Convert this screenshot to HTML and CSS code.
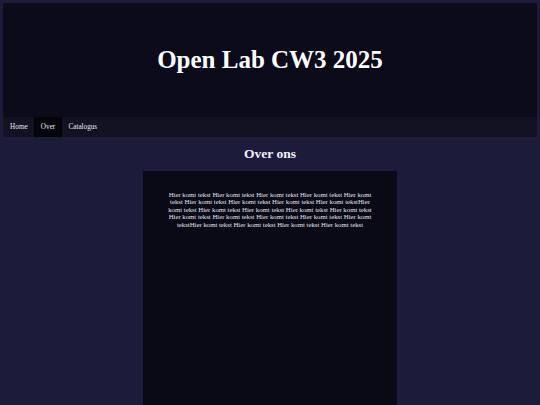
FILE: index.html
```html
<!DOCTYPE html>
<html lang="nl">
<head>
<meta charset="utf-8">
<title>Over - Open Lab CW3 2025</title>
<link rel="stylesheet" href="styles.css">
</head>
<body>
<header class="site-header">
  <h1 class="site-title">Open Lab CW3 2025</h1>
</header>
<nav class="main-nav">
  <a class="nav-link" href="#">Home</a>
  <a class="nav-link active" href="#">Over</a>
  <a class="nav-link" href="#">Catalogus</a>
</nav>
<main class="content">
  <h2 class="page-title">Over ons</h2>
  <section class="text-box">
    <p class="body-text">Hier komt tekst Hier komt tekst Hier komt tekst Hier komt tekst Hier komt tekst Hier komt tekst Hier komt tekst Hier komt tekst Hier komt tekstHier komt tekst Hier komt tekst Hier komt tekst Hier komt tekst Hier komt tekst Hier komt tekst Hier komt tekst Hier komt tekst Hier komt tekst Hier komt tekstHier komt tekst Hier komt tekst Hier komt tekst Hier komt tekst</p>
  </section>
</main>
</body>
</html>
```
FILE: styles.css
```css
html, body {
  margin: 0;
  padding: 0;
}
html {
  background: #1c1c3a;
}
body {
  background: #1c1c3a;
  font-family: "Liberation Serif", "Times New Roman", serif;
  color: #ececf2;
  padding: 3px 3px 0 3px;
  height: 100vh;
  box-sizing: border-box;
  display: flex;
  flex-direction: column;
  overflow: hidden;
}
.site-header {
  background: #0b0b1a;
  height: 114px;
  flex: none;
  display: flex;
  align-items: center;
  justify-content: center;
}
.site-title {
  margin: 0;
  font-size: 25px;
  font-weight: bold;
  color: #ffffff;
}
.main-nav {
  background: #121222;
  height: 20px;
  flex: none;
  display: flex;
  align-items: stretch;
  padding-left: 0.5px;
}
.nav-link {
  display: flex;
  align-items: center;
  padding: 0 6.6px;
  font-size: 7.2px;
  color: #e8e8f0;
  text-decoration: none;
}
.nav-link.active {
  background: #050509;
}
.content {
  flex: 1;
  min-height: 0;
  display: flex;
  flex-direction: column;
  align-items: center;
}
.page-title {
  margin: 8px 0 9px 0;
  font-size: 13.5px;
  font-weight: bold;
  color: #f2f2f8;
  line-height: 17px;
}
.text-box {
  background: #0a0a17;
  width: 254px;
  flex: 1;
  box-sizing: border-box;
  padding: 20px 20px;
}
.body-text {
  margin: 0;
  font-size: 6.77px;
  line-height: 7.4px;
  text-align: center;
  color: #e4e4ec;
}
```
